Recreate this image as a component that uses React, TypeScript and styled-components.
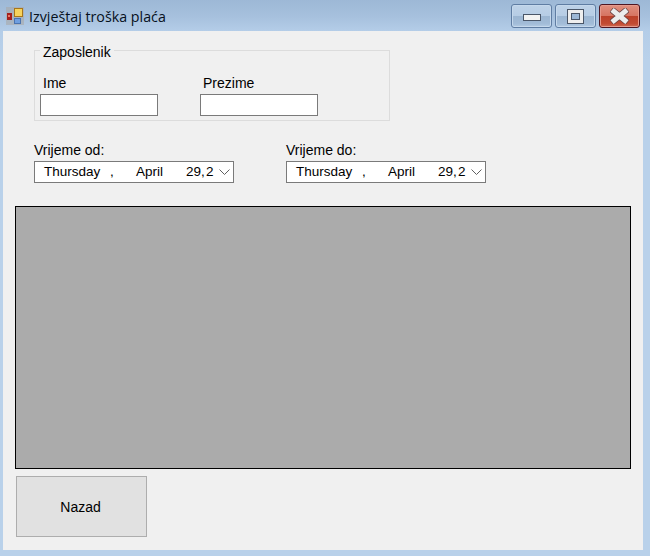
import { createGlobalStyle } from "styled-components";
import styled from "styled-components";

const GlobalStyle = createGlobalStyle`
  html, body {
    margin: 0;
    padding: 0;
    background: #b9d1ea;
  }
`;

const Frame = styled.div`
  width: 650px;
  height: 556px;
  overflow: hidden;
  display: flex;
  flex-direction: column;
  background: linear-gradient(180deg, #9db8d6 0px, #a6c0dd 16px, #b4cde8 31px, #b9d1ea 60px);
  font-family: "Liberation Sans", Arial, sans-serif;
  font-size: 14px;
  color: #000;
`;

const TitleBar = styled.div`
  height: 31px;
  flex: none;
  display: flex;
  align-items: flex-start;
  padding: 0 10px 0 6px;
  box-sizing: border-box;
`;

const AppIcon = styled.svg`
  width: 18px;
  height: 18px;
  margin-top: 7px;
  flex: none;
`;

const TitleText = styled.div`
  margin-left: 5px;
  margin-top: 7px;
  font-family: "Open Sans", sans-serif;
  font-size: 14.25px;
  line-height: 19px;
  color: #06101c;
`;

const WindowButtons = styled.div`
  margin-left: auto;
  margin-top: 4px;
  display: flex;
  gap: 3px;
`;

const WindowButton = styled.div<{ $close?: boolean }>`
  width: 41px;
  height: 24px;
  box-sizing: border-box;
  border-radius: 3px;
  display: flex;
  align-items: center;
  justify-content: center;
  border: 1px solid ${(p) => (p.$close ? "#4f1622" : "#5f7da3")};
  box-shadow: inset 0 0 0 1px ${(p) => (p.$close ? "#e59a8d" : "#c5d8ec")};
  background: ${(p) =>
    p.$close
      ? "linear-gradient(180deg, #e08f7f 0, #d67563 48%, #bb4029 50%, #c24b33 85%, #cf6d55 100%)"
      : "linear-gradient(180deg, #bed2e8 0, #b7cde5 48%, #9cb6d2 50%, #a2bcd8 85%, #b4cce4 100%)"};
`;

const MinimizeGlyph = styled.svg`
  margin-top: 2px;
`;

const Body = styled.div`
  width: 640px;
  height: 519px;
  margin-left: 3px;
  box-sizing: border-box;
  background: #f0f0f0;
  padding: 19px 12px 0;
  display: flex;
  flex-direction: column;
`;

const GroupBox = styled.div`
  width: 356px;
  height: 71px;
  box-sizing: border-box;
  margin-left: 19px;
  padding-left: 5px;
  border: 1px solid #dcdcdc;
  display: flex;
  gap: 42px;
  position: relative;
`;

const GroupLegend = styled.div`
  position: absolute;
  top: -6px;
  left: 5px;
  padding: 0 3px;
  line-height: 15px;
  background: #f0f0f0;
`;

const Field = styled.div`
  display: flex;
  flex-direction: column;
  margin-top: 25px;
`;

const FieldLabel = styled.label`
  line-height: 15px;
  margin: 0 0 3px 3px;
`;

const TextInput = styled.div`
  width: 118px;
  height: 22px;
  box-sizing: border-box;
  background: #fff;
  border: 1px solid #7a7a7a;
`;

const DateRow = styled.div`
  display: flex;
  gap: 52px;
  margin: 22px 0 0 19px;
`;

const DateField = styled.div`
  display: flex;
  flex-direction: column;
`;

const DateLabel = styled.label`
  line-height: 15px;
  margin-bottom: 3px;
`;

const DatePicker = styled.div`
  width: 200px;
  height: 22px;
  box-sizing: border-box;
  background: #fff;
  border: 1px solid #7a7a7a;
  display: flex;
  align-items: center;
  padding-left: 9px;
  font-size: 13.5px;
  line-height: 20px;
  white-space: pre;
`;

const DatePart = styled.span<{ $width: number }>`
  width: ${(p) => p.$width}px;
  flex: none;
  word-spacing: -2.500px;
`;

const Chevron = styled.svg`
  width: 11px;
  height: 7px;
  flex: none;
`;

const ReportArea = styled.div`
  width: 616px;
  height: 263px;
  box-sizing: border-box;
  margin-top: 23px;
  background: #ababab;
  border: 1px solid #000;
`;

const BackButton = styled.button`
  width: 131px;
  height: 61px;
  box-sizing: border-box;
  margin: 7px 0 0 1px;
  padding: 0 2px 0 0;
  background: #e1e1e1;
  border: 1px solid #adadad;
  font-family: inherit;
  font-size: 14px;
  color: #000;
`;

export default function App() {
  return (
    <>
      <GlobalStyle />
      <Frame>
        <TitleBar>
          <AppIcon viewBox="0 0 18 18">
            <rect x="0" y="0" width="18" height="18" fill="#a8a8a8" opacity="0.6" />
            <rect x="1" y="6" width="5" height="7" fill="#a5201c" />
            <rect x="2" y="8" width="2" height="2" fill="#ee7766" />
            <rect x="8.500" y="1.500" width="8" height="8" fill="#f7d35c" stroke="#a8761a" />
            <rect x="8.500" y="11.500" width="6" height="5" fill="#6f9fe0" stroke="#4a74b0" />
          </AppIcon>
          <TitleText>Izvještaj troška plaća</TitleText>
          <WindowButtons>
            <WindowButton>
              <MinimizeGlyph width="18" height="7" viewBox="0 0 18 7">
                <rect x="0.5" y="0.5" width="17" height="6" fill="#f2f2f2" stroke="#4a5668" />
              </MinimizeGlyph>
            </WindowButton>
            <WindowButton>
              <svg width="17" height="15" viewBox="0 0 17 15">
                <rect x="0.5" y="0.5" width="16" height="14" fill="#eeeeee" stroke="#4a5668" />
                <rect x="4.5" y="4.5" width="8" height="6" fill="#9db8d6" stroke="#4a5668" />
              </svg>
            </WindowButton>
            <WindowButton $close>
              <svg width="19" height="16" viewBox="0 0 19 16">
                <path d="M4 3.500L15 12.500M15 3.500L4 12.500" stroke="#6a4444" strokeWidth="6.500" strokeLinecap="square" fill="none" />
                <path d="M4 3.500L15 12.500M15 3.500L4 12.500" stroke="#ececec" strokeWidth="5" strokeLinecap="square" fill="none" />
              </svg>
            </WindowButton>
          </WindowButtons>
        </TitleBar>
        <Body>
          <GroupBox>
            <GroupLegend>Zaposlenik</GroupLegend>
            <Field>
              <FieldLabel>Ime</FieldLabel>
              <TextInput />
            </Field>
            <Field>
              <FieldLabel>Prezime</FieldLabel>
              <TextInput />
            </Field>
          </GroupBox>
          <DateRow>
            {["Vrijeme od:", "Vrijeme do:"].map((label) => (
              <DateField key={label}>
                <DateLabel>{label}</DateLabel>
                <DatePicker>
                  <DatePart $width={66}>Thursday</DatePart>
                  <DatePart $width={26}>,</DatePart>
                  <DatePart $width={50}>April</DatePart>
                  <DatePart $width={33}>29, 2</DatePart>
                  <Chevron viewBox="0 0 11 7">
                    <path d="M0.500 0.500L5.500 5.500L10.500 0.500" fill="none" stroke="#606060" />
                  </Chevron>
                </DatePicker>
              </DateField>
            ))}
          </DateRow>
          <ReportArea />
          <BackButton>Nazad</BackButton>
        </Body>
      </Frame>
    </>
  );
}
